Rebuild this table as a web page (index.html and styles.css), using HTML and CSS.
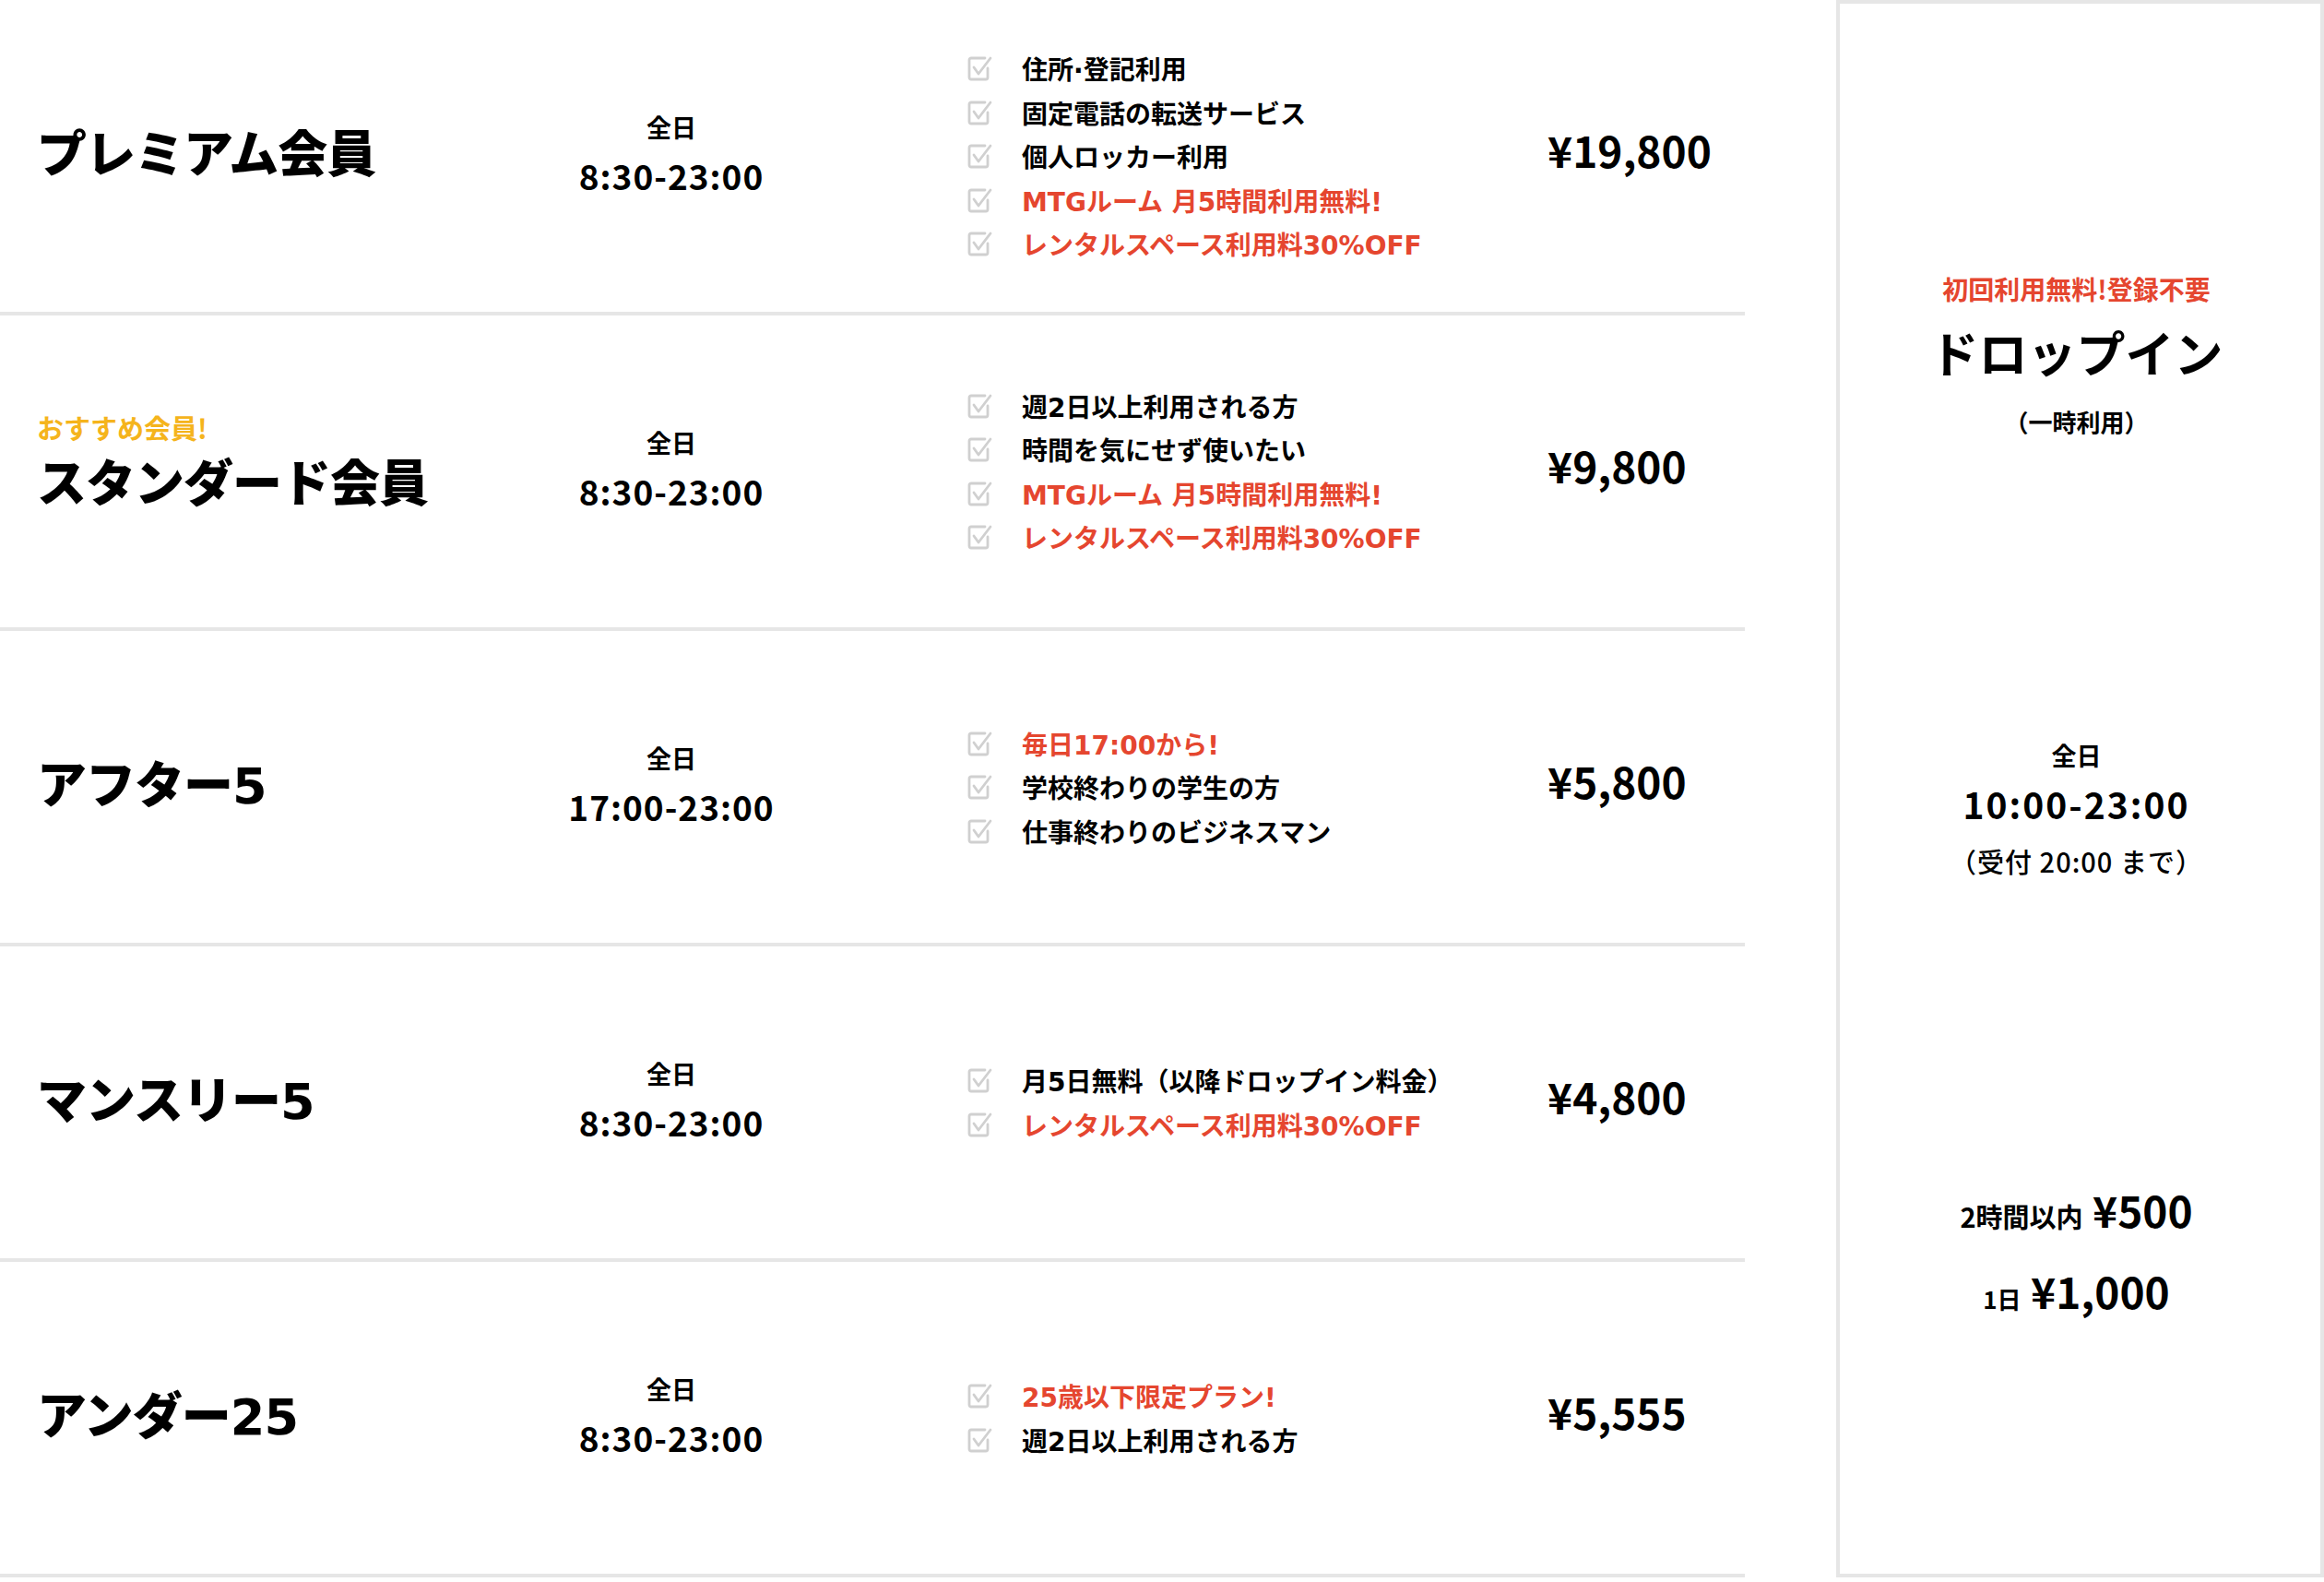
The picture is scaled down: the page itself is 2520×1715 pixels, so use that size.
FILE: index.html
```html
<!DOCTYPE html>
<html lang="ja">
<head>
  <meta charset="UTF-8">
  <meta name="viewport" content="width=device-width, initial-scale=1.0">
  <title>料金プラン</title>
  <link rel="stylesheet" href="styles.css">
</head>
<body>
  <div class="plans">
    <div class="plan-table">

      <div class="plan-row">
        <div class="plan-name">
          <h2>プレミアム会員</h2>
        </div>
        <div class="plan-time">
          <p class="days">全日</p>
          <p class="hours">8:30-23:00</p>
        </div>
        <ul class="plan-features">
          <li><svg class="check" viewBox="0 0 30 30"><path d="M23 15v10a2 2 0 0 1-2 2H5a2 2 0 0 1-2-2V6a2 2 0 0 1 2-2h15"/><path d="M8 14l5 7 13-17"/></svg>住所·登記利用</li>
          <li><svg class="check" viewBox="0 0 30 30"><path d="M23 15v10a2 2 0 0 1-2 2H5a2 2 0 0 1-2-2V6a2 2 0 0 1 2-2h15"/><path d="M8 14l5 7 13-17"/></svg>固定電話の転送サービス</li>
          <li><svg class="check" viewBox="0 0 30 30"><path d="M23 15v10a2 2 0 0 1-2 2H5a2 2 0 0 1-2-2V6a2 2 0 0 1 2-2h15"/><path d="M8 14l5 7 13-17"/></svg>個人ロッカー利用</li>
          <li class="red"><svg class="check" viewBox="0 0 30 30"><path d="M23 15v10a2 2 0 0 1-2 2H5a2 2 0 0 1-2-2V6a2 2 0 0 1 2-2h15"/><path d="M8 14l5 7 13-17"/></svg>MTGルーム 月5時間利用無料!</li>
          <li class="red"><svg class="check" viewBox="0 0 30 30"><path d="M23 15v10a2 2 0 0 1-2 2H5a2 2 0 0 1-2-2V6a2 2 0 0 1 2-2h15"/><path d="M8 14l5 7 13-17"/></svg>レンタルスペース利用料30%OFF</li>
        </ul>
        <p class="plan-price">¥19,800</p>
      </div>

      <div class="plan-row">
        <div class="plan-name featured">
          <p class="recommend">おすすめ会員!</p>
          <h2>スタンダード会員</h2>
        </div>
        <div class="plan-time">
          <p class="days">全日</p>
          <p class="hours">8:30-23:00</p>
        </div>
        <ul class="plan-features">
          <li><svg class="check" viewBox="0 0 30 30"><path d="M23 15v10a2 2 0 0 1-2 2H5a2 2 0 0 1-2-2V6a2 2 0 0 1 2-2h15"/><path d="M8 14l5 7 13-17"/></svg>週2日以上利用される方</li>
          <li><svg class="check" viewBox="0 0 30 30"><path d="M23 15v10a2 2 0 0 1-2 2H5a2 2 0 0 1-2-2V6a2 2 0 0 1 2-2h15"/><path d="M8 14l5 7 13-17"/></svg>時間を気にせず使いたい</li>
          <li class="red"><svg class="check" viewBox="0 0 30 30"><path d="M23 15v10a2 2 0 0 1-2 2H5a2 2 0 0 1-2-2V6a2 2 0 0 1 2-2h15"/><path d="M8 14l5 7 13-17"/></svg>MTGルーム 月5時間利用無料!</li>
          <li class="red"><svg class="check" viewBox="0 0 30 30"><path d="M23 15v10a2 2 0 0 1-2 2H5a2 2 0 0 1-2-2V6a2 2 0 0 1 2-2h15"/><path d="M8 14l5 7 13-17"/></svg>レンタルスペース利用料30%OFF</li>
        </ul>
        <p class="plan-price">¥9,800</p>
      </div>

      <div class="plan-row">
        <div class="plan-name">
          <h2>アフター5</h2>
        </div>
        <div class="plan-time">
          <p class="days">全日</p>
          <p class="hours">17:00-23:00</p>
        </div>
        <ul class="plan-features">
          <li class="red"><svg class="check" viewBox="0 0 30 30"><path d="M23 15v10a2 2 0 0 1-2 2H5a2 2 0 0 1-2-2V6a2 2 0 0 1 2-2h15"/><path d="M8 14l5 7 13-17"/></svg>毎日17:00から!</li>
          <li><svg class="check" viewBox="0 0 30 30"><path d="M23 15v10a2 2 0 0 1-2 2H5a2 2 0 0 1-2-2V6a2 2 0 0 1 2-2h15"/><path d="M8 14l5 7 13-17"/></svg>学校終わりの学生の方</li>
          <li><svg class="check" viewBox="0 0 30 30"><path d="M23 15v10a2 2 0 0 1-2 2H5a2 2 0 0 1-2-2V6a2 2 0 0 1 2-2h15"/><path d="M8 14l5 7 13-17"/></svg>仕事終わりのビジネスマン</li>
        </ul>
        <p class="plan-price">¥5,800</p>
      </div>

      <div class="plan-row">
        <div class="plan-name">
          <h2>マンスリー5</h2>
        </div>
        <div class="plan-time">
          <p class="days">全日</p>
          <p class="hours">8:30-23:00</p>
        </div>
        <ul class="plan-features">
          <li><svg class="check" viewBox="0 0 30 30"><path d="M23 15v10a2 2 0 0 1-2 2H5a2 2 0 0 1-2-2V6a2 2 0 0 1 2-2h15"/><path d="M8 14l5 7 13-17"/></svg>月5日無料（以降ドロップイン料金）</li>
          <li class="red"><svg class="check" viewBox="0 0 30 30"><path d="M23 15v10a2 2 0 0 1-2 2H5a2 2 0 0 1-2-2V6a2 2 0 0 1 2-2h15"/><path d="M8 14l5 7 13-17"/></svg>レンタルスペース利用料30%OFF</li>
        </ul>
        <p class="plan-price">¥4,800</p>
      </div>

      <div class="plan-row">
        <div class="plan-name">
          <h2>アンダー25</h2>
        </div>
        <div class="plan-time">
          <p class="days">全日</p>
          <p class="hours">8:30-23:00</p>
        </div>
        <ul class="plan-features">
          <li class="red"><svg class="check" viewBox="0 0 30 30"><path d="M23 15v10a2 2 0 0 1-2 2H5a2 2 0 0 1-2-2V6a2 2 0 0 1 2-2h15"/><path d="M8 14l5 7 13-17"/></svg>25歳以下限定プラン!</li>
          <li><svg class="check" viewBox="0 0 30 30"><path d="M23 15v10a2 2 0 0 1-2 2H5a2 2 0 0 1-2-2V6a2 2 0 0 1 2-2h15"/><path d="M8 14l5 7 13-17"/></svg>週2日以上利用される方</li>
        </ul>
        <p class="plan-price">¥5,555</p>
      </div>

    </div>

    <div class="dropin">
      <p class="dropin-note">初回利用無料!登録不要</p>
      <h2 class="dropin-title">ドロップイン</h2>
      <p class="dropin-sub">（一時利用）</p>

      <p class="dropin-days">全日</p>
      <p class="dropin-hours">10:00-23:00</p>
      <p class="dropin-reception">（受付 20:00 まで）</p>

      <p class="dropin-price"><span class="label">2時間以内</span> ¥500</p>
      <p class="dropin-price day"><span class="label small">1日</span> ¥1,000</p>
    </div>
  </div>
</body>
</html>
```

FILE: styles.css
```css
body {
  margin: 0;
  font-family: "Noto Sans CJK JP", "Noto Sans", sans-serif;
  font-weight: 700;
  color: #000;
  background: #fff;
}

p, h2, ul {
  margin: 0;
  padding: 0;
}

.plans {
  display: flex;
  gap: 99px;
}

.plan-table {
  width: 1892px;
}

.plan-row {
  display: grid;
  grid-template-columns: 566px 244px 828px 1fr;
  align-items: center;
  height: 338px;
  padding-left: 40px;
  border-bottom: 4px solid #e6e6e6;
}

.plan-name h2 {
  font-family: "DejaVu Sans", "Noto Sans CJK JP", sans-serif;
  font-size: 54px;
  font-weight: 900;
  line-height: 1;
  letter-spacing: -1px;
}

.plan-name.featured {
  margin-bottom: 20px;
}

.recommend {
  color: #f5b41c;
  font-size: 29px;
  line-height: 1;
  margin-bottom: 21px;
}

.plan-time {
  text-align: center;
  margin-bottom: 6px;
}

.days {
  font-size: 27px;
  line-height: 1;
}

.hours {
  font-size: 37px;
  line-height: 1;
  margin-top: 21px;
  letter-spacing: 1px;
}

.plan-features {
  list-style: none;
  padding-left: 198px;
}

.plan-features li {
  display: flex;
  align-items: center;
  gap: 30px;
  height: 47.5px;
  font-family: "DejaVu Sans", "Noto Sans CJK JP", sans-serif;
  font-size: 28px;
}

.plan-features .red {
  color: #e5462f;
}

.check {
  width: 30px;
  height: 30px;
  flex: none;
  fill: none;
  stroke: #d0d0d0;
  stroke-width: 2.8;
  stroke-linecap: round;
  stroke-linejoin: round;
}

.plan-price {
  font-size: 46px;
  line-height: 1;
  margin-bottom: 14px;
}

.dropin {
  width: 513px;
  border: 4px solid #e6e6e6;
  padding: 295px 8px 0 0;
  text-align: center;
}

.dropin-note {
  color: #e5462f;
  font-size: 28px;
  line-height: 1;
}

.dropin-title {
  font-size: 53px;
  line-height: 1;
  margin-top: 28px;
}

.dropin-sub {
  font-size: 26px;
  line-height: 1;
  margin-top: 36px;
}

.dropin-days {
  font-size: 27px;
  line-height: 1;
  margin-top: 335px;
}

.dropin-hours {
  font-size: 39px;
  line-height: 1;
  margin-top: 20px;
  letter-spacing: 2px;
}

.dropin-reception {
  font-size: 29px;
  font-weight: 500;
  line-height: 1;
  margin-top: 28px;
  letter-spacing: 1px;
}

.dropin-price {
  font-size: 46px;
  line-height: 1;
  margin-top: 340px;
}

.dropin-price.day {
  margin-top: 42px;
}

.dropin-price .label {
  font-size: 29px;
}

.dropin-price .label.small {
  font-size: 26px;
}
```
